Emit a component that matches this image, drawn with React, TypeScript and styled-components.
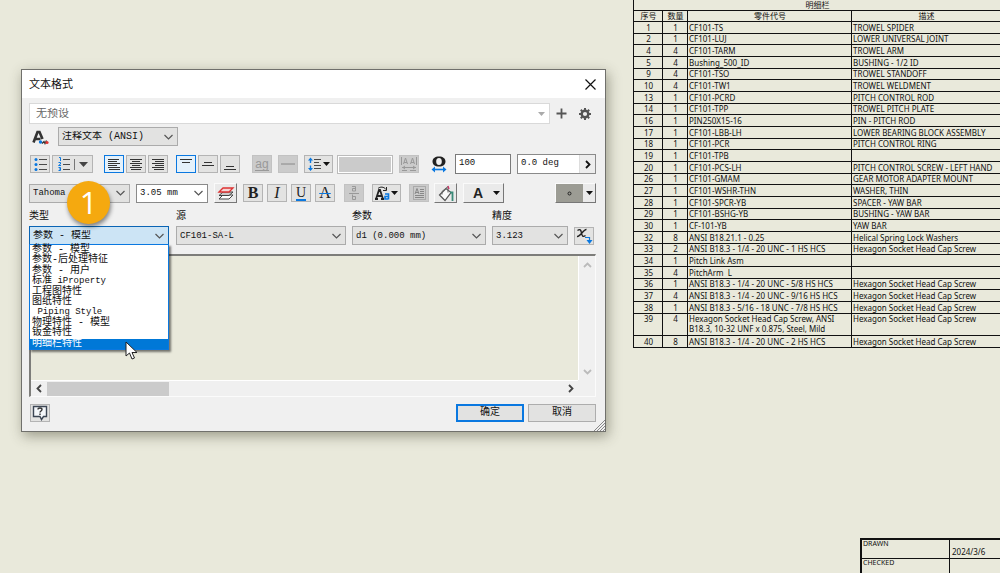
import React from "react";
import styled, { createGlobalStyle, css } from "styled-components";

const ink = "#4a4a4a";
const blue = "#0a78e0";

const GlobalStyle = createGlobalStyle`
  * { box-sizing: border-box; }
  body {
    margin: 0;
    background: #e9e9db;
    color: #111;
    font-family: "Liberation Mono", "Noto Sans CJK SC", monospace;
    font-size: 10px;
  }
  button, input, select, textarea { font: inherit; color: inherit; margin: 0; border-radius: 0; }
`;

/* ---------- drawing sheet ---------- */

const Sheet = styled.main`
  position: relative;
  display: flex;
  flex-direction: column;
  align-items: flex-end;
  justify-content: space-between;
  min-height: 100vh;
  overflow: hidden;
  font-family: "Noto Sans", "Noto Sans CJK SC", sans-serif;
  font-size: 8px;
  line-height: 10px;
`;

const PartsTable = styled.table`
  width: 367px;
  height: 348px;
  table-layout: fixed;
  border-collapse: collapse;
  th, td {
    border: 1px solid #111;
    border-right: 0;
    padding: 0 0 0 1px;
    font-weight: 400;
    vertical-align: bottom;
    white-space: nowrap;
  }
  tr:first-child th { border-top: 0; }
  tr:nth-last-child(2) td { vertical-align: top; }
  td:nth-child(-n + 2) { text-align: center; }
`;

const Col = styled.col<{ $w?: number }>`
  ${(p) => p.$w && css`width: ${p.$w}px;`}
`;

const TitleBlock = styled.dl`
  display: grid;
  grid-template-columns: 88px 50px;
  grid-template-rows: 19px 14px;
  margin: 0;
  border-top: 2px solid #111;
  border-left: 2px solid #111;
  line-height: 8px;
  font-size: 7px;
  dt { border-right: 1px solid #111; padding-left: 1px; }
  dd { margin: 0; padding: 8px 0 0 2px; font-size: 8px; }
  dt:first-child, dd:nth-child(2) { border-bottom: 1px solid #111; }
`;

const parts: [number, number, string, string][] = [
  [1, 1, "CF101-TS", "TROWEL SPIDER"],
  [2, 1, "CF101-LUJ", "LOWER UNIVERSAL JOINT"],
  [4, 4, "CF101-TARM", "TROWEL ARM"],
  [5, 4, "Bushing_500_ID", "BUSHING - 1/2 ID"],
  [9, 4, "CF101-TSO", "TROWEL STANDOFF"],
  [10, 4, "CF101-TW1", "TROWEL WELDMENT"],
  [13, 1, "CF101-PCRD", "PITCH CONTROL ROD"],
  [14, 1, "CF101-TPP", "TROWEL PITCH PLATE"],
  [16, 1, "PIN250X15-16", "PIN - PITCH ROD"],
  [17, 1, "CF101-LBB-LH", "LOWER BEARING BLOCK ASSEMBLY"],
  [18, 1, "CF101-PCR", "PITCH CONTROL RING"],
  [19, 1, "CF101-TPB", ""],
  [20, 1, "CF101-PCS-LH", "PITCH CONTROL SCREW - LEFT HAND"],
  [26, 1, "CF101-GMAM", "GEAR MOTOR ADAPTER MOUNT"],
  [27, 1, "CF101-WSHR-THN", "WASHER, THIN"],
  [28, 1, "CF101-SPCR-YB", "SPACER - YAW BAR"],
  [29, 1, "CF101-BSHG-YB", "BUSHING - YAW BAR"],
  [30, 1, "CF-101-YB", "YAW BAR"],
  [32, 8, "ANSI B18.21.1 - 0.25", "Helical Spring Lock Washers"],
  [33, 2, "ANSI B18.3 - 1/4 - 20 UNC - 1 HS HCS", "Hexagon Socket Head Cap Screw"],
  [34, 1, "Pitch Link Asm", ""],
  [35, 4, "PitchArm  L", ""],
  [36, 1, "ANSI B18.3 - 1/4 - 20 UNC - 5/8 HS HCS", "Hexagon Socket Head Cap Screw"],
  [37, 4, "ANSI B18.3 - 1/4 - 20 UNC - 9/16 HS HCS", "Hexagon Socket Head Cap Screw"],
  [38, 1, "ANSI B18.3 - 5/16 - 18 UNC - 7/8 HS HCS", "Hexagon Socket Head Cap Screw"],
  [39, 4, "Hexagon Socket Head Cap Screw, ANSI\nB18.3, 10-32 UNF x 0.875, Steel, Mild", "Hexagon Socket Head Cap Screw"],
  [40, 8, "ANSI B18.3 - 1/4 - 20 UNC - 2 HS HCS", "Hexagon Socket Head Cap Screw"],
];

const PartName = styled.span`
  white-space: pre;
`;

/* ---------- dialog ---------- */

const Dialog = styled.section`
  position: absolute;
  left: 21px;
  top: 69px;
  width: 585px;
  max-width: calc(100% - 21px);
  border: 1px solid #70706c;
  background: #f0f0f0;
  box-shadow: 2px 4px 12px rgba(60, 60, 40, 0.45);
  font-family: "Liberation Mono", "Noto Sans CJK SC", monospace;
  font-size: 10px;
  line-height: 12px;
`;

const TitleBar = styled.header`
  display: flex;
  align-items: center;
  justify-content: space-between;
  height: 28px;
  padding: 0 8px 0 7px;
  background: #fff;
  h1 {
    margin: 0;
    font: 400 11px/14px "Liberation Sans", "Noto Sans CJK SC", sans-serif;
  }
`;

const Body = styled.div`
  display: flex;
  flex-direction: column;
  padding: 5px 9px 9px 7px;
`;

const Row = styled.div<{ $h: number; $mt?: number }>`
  display: flex;
  align-items: center;
  height: ${(p) => p.$h}px;
  margin-top: ${(p) => p.$mt ?? 0}px;
`;

const Group = styled.div<{ $gap?: number; $ml?: number; $push?: boolean }>`
  display: flex;
  align-items: center;
  gap: ${(p) => p.$gap ?? 2}px;
  margin-left: ${(p) => (p.$push ? "auto" : `${p.$ml ?? 0}px`)};
`;

const BareButton = styled.button<{ $w?: number }>`
  display: flex;
  align-items: center;
  justify-content: center;
  flex: none;
  width: ${(p) => p.$w ?? 14}px;
  height: 18px;
  padding: 0;
  border: 0;
  background: none;
`;

const ToolButton = styled(BareButton)<{ $on?: boolean; $raised?: boolean }>`
  width: ${(p) => p.$w ?? 20}px;
  border: 1px solid #b4b4b4;
  background: #e3e3e2;
  &:disabled { background: #cbcbcb; border-color: #c2c2c2; }
  ${(p) => p.$on && css`
    border-color: ${blue};
    background: #e4f1fb;
  `}
  ${(p) => p.$raised && css`
    height: 20px;
    border-color: #fafafa #777 #777 #fafafa;
    background: #eaeaea;
  `}
`;

const PresetBox = styled.div`
  display: grid;
  flex: 1;
  height: 21px;
  border: 1px solid #d9d9d9;
  background: #fff;
  svg { grid-area: 1 / 1; place-self: center end; margin-right: 4px; pointer-events: none; }
  select {
    grid-area: 1 / 1;
    appearance: none;
    border: 0;
    padding: 0 6px;
    background: none;
    color: #666;
    font-size: 11px;
  }
`;

const SelectBox = styled.div<{ $w: number; $white?: boolean; $open?: boolean; $small?: boolean }>`
  position: relative;
  display: grid;
  flex: none;
  width: ${(p) => p.$w}px;
  height: 19px;
  border: 1px solid ${(p) => (p.$open ? "#0a64b4" : p.$white ? "#8a8a8a" : "#ababab")};
  background: ${(p) => (p.$open ? "#cce4f5" : p.$white ? "#fff" : "#e2e2e1")};
  > svg { grid-area: 1 / 1; place-self: center end; margin-right: 4px; pointer-events: none; }
  > select {
    grid-area: 1 / 1;
    min-width: 0;
    appearance: none;
    border: 0;
    padding: 0 3px;
    background: none;
    font-size: ${(p) => (p.$small ? 9 : 10)}px;
  }
`;

const Options = styled.ul`
  position: absolute;
  z-index: 2;
  left: -1px;
  top: 17px;
  display: grid;
  grid-auto-rows: 1fr;
  width: calc(100% + 2px);
  height: 106px;
  margin: 0;
  padding: 0;
  border: 1px solid ${blue};
  background: #fff;
  box-shadow: 2px 2px 2px rgba(0, 0, 0, 0.5);
  list-style: none;
  line-height: 10px;
  white-space: pre;
`;

const Option = styled.li<{ $on?: boolean }>`
  padding-left: 2px;
  ${(p) => p.$on && css`
    background: #0078d7;
    color: #fff;
  `}
`;

const Latin = styled.span`
  font-size: 9px;
`;

const TextField = styled.input<{ $w: number }>`
  width: ${(p) => p.$w}px;
  height: 20px;
  padding: 0 3px 2px;
  border: 1px solid #7a7a7a;
  background: #fff;
  && { font-size: 9px; }
`;

const AngleBox = styled.div`
  display: flex;
  width: 79px;
  height: 20px;
  border: 1px solid #8a8a8a;
  input { border: 0; flex: 1; height: 18px; }
  button { border-left: 1px solid #ddd; background: #ededed; }
`;

const Swatch = styled.div`
  width: 56px;
  height: 19px;
  border: 1px solid #bbb;
  outline: 1px solid #fff;
  outline-offset: -2px;
  background: #cbcbcb;
`;

const ColorCell = styled.span`
  display: flex;
  align-items: center;
  justify-content: center;
  flex: 1;
  align-self: stretch;
  background: #9c9c94;
`;

const Fields = styled.div`
  display: grid;
  grid-template-columns: 141px 170px 134px 76px 20px;
  column-gap: 6px;
  row-gap: 3px;
  align-items: center;
  justify-content: start;
  margin-top: 8px;
  label { line-height: 12px; }
`;

const Editor = styled.div`
  display: grid;
  grid-template-columns: 1fr 17px;
  grid-template-rows: 124px 16px;
  margin-top: 9px;
  border: 1px solid #fbfbfb;
  border-top: 2px solid #7d7d7a;
  border-left: 2px solid #7d7d7a;
  textarea {
    min-width: 0;
    border: 0;
    padding: 4px;
    background: #e9e9db;
    resize: none;
    outline: 0;
  }
`;

const VScroll = styled.div`
  display: flex;
  flex-direction: column;
  justify-content: space-between;
  align-items: center;
  border-left: 1px solid #fff;
`;

const HScroll = styled.div`
  display: flex;
  align-items: center;
  border-top: 1px solid #fff;
  > button:last-child { margin-left: auto; }
`;

const Thumb = styled.div`
  width: 122px;
  height: 14px;
  background: #cbcbcb;
`;

const CommandButton = styled.button<{ $primary?: boolean }>`
  width: 68px;
  height: 18px;
  padding: 0;
  border: ${(p) => (p.$primary ? `2px solid ${blue}` : "1px solid #adadad")};
  background: #e2e2e1;
  line-height: 12px;
`;

const Grip = styled.svg`
  position: absolute;
  right: 0;
  bottom: 0;
`;

const StepBadge = styled.div`
  position: absolute;
  z-index: 3;
  left: 67px;
  top: 181px;
  width: 43px;
  height: 43px;
  border-radius: 50%;
  background: #f5a90f;
  box-shadow: 1px 3px 4px rgba(0, 0, 0, 0.45);
  color: #fff;
  font: 400 31px/43px "Open Sans", sans-serif;
  text-align: center;
`;

const Pointer = styled.svg`
  position: absolute;
  z-index: 4;
  left: 125px;
  top: 341px;
`;

/* ---------- icons ---------- */

const Svg = ({ w, h, children }: { w: number; h: number; children: React.ReactNode }) => (
  <svg width={w} height={h} viewBox={`0 0 ${w} ${h}`} fill="none" aria-hidden="true">{children}</svg>
);

const Chevron = () => (
  <Svg w={9} h={6}><path d="M.5 1l4 4 4-4" stroke="#555" strokeWidth="1.2" /></Svg>
);

const Caret = ({ color = "#111" }: { color?: string }) => (
  <Svg w={7} h={4}><path d="M0 0h7L3.500 4z" fill={color} /></Svg>
);

const Arrow = ({ d, color }: { d: string; color: string }) => (
  <Svg w={9} h={9}><path d={d} stroke={color} strokeWidth="1.800" /></Svg>
);

const Lines = ({ rows }: { rows: [number, number, number][] }) => (
  <Svg w={18} h={16}>
    {rows.map(([y, x1, x2]) => (
      <path key={y} d={`M${x1} ${y + 0.5}H${x2}`} stroke="#333" />
    ))}
  </Svg>
);

const alignLeft: [number, number, number][] = [[3, 3, 14], [5, 3, 12], [7, 3, 15], [9, 3, 12], [11, 3, 15], [13, 4, 15]];
const alignMid: [number, number, number][] = [[3, 3, 15], [5, 5, 13], [7, 3, 15], [9, 5, 13], [11, 3, 15], [13, 4, 14]];
const alignRight: [number, number, number][] = [[3, 3, 15], [5, 6, 15], [7, 3, 15], [9, 6, 15], [11, 3, 15], [13, 5, 15]];

const Bullets = () => (
  <Svg w={18} h={16}>
    <path d="M8 3.500h8M8 8.500h8M8 13.500h8" stroke={ink} />
    <g fill={blue}><circle cx="5" cy="3.500" r="1.500" /><circle cx="5" cy="8.500" r="1.500" /><circle cx="5" cy="13.500" r="1.500" /></g>
  </Svg>
);

const Numbered = () => (
  <Svg w={38} h={16}>
    <path d="M9 3.500h7M9 8.500h7M9 13.500h7" stroke={ink} />
    <path d="M5 1.500h1.500v3.500M4.500 6.500h2v1.500l-2 1.500h2.500M4.500 11.500h2v1.500h-1.500M6.500 13v1.500h-2" stroke={blue} />
    <path d="M20.500 3v11" stroke="#777" />
    <path d="M25 6h9l-4.500 5z" fill="#444" />
  </Svg>
);

const TextStyle = () => (
  <Svg w={18} h={18}>
    <path d="M2.500 14.500L6.500 4h2l3 7M4.500 11h5" stroke="#333" strokeWidth="2.600" />
    <circle cx="9.500" cy="14" r="1.700" fill={blue} />
    <path d="M11 15.500l2-2 1 2 1.500-3" stroke="#333" strokeWidth="1.300" />
    <circle cx="16" cy="14.500" r="1.600" fill="#d33" />
  </Svg>
);

const Gear = () => (
  <Svg w={12} h={12}>
    <circle cx="6" cy="6" r="3.300" stroke="#555" strokeWidth="2.400" />
    <path d="M6 0v2M6 10v2M0 6h2M10 6h2M1.800 1.800l1.400 1.400M8.800 8.800l1.400 1.400M10.200 1.800L8.800 3.200M1.800 10.200l1.400-1.400" stroke="#555" strokeWidth="2" />
  </Svg>
);

const Spacing = () => (
  <Svg w={27} h={16}>
    <path d="M5.500 3v4M5.500 9.500v4" stroke={blue} strokeWidth="1.400" />
    <path d="M3 4.500L5.500 1.500 8 4.500zM3 12l2.500 3L8 12z" fill={blue} />
    <path d="M9 3.500h7M9 6.500h5M9 9.500h7M9 12.500h7" stroke={ink} />
    <path d="M18 6h7l-3.500 4z" fill="#111" />
  </Svg>
);

const Glyph = styled.span<{ $size: number; $serif?: boolean; $bold?: boolean; $italic?: boolean; $color?: string }>`
  font-family: ${(p) => (p.$serif ? '"Liberation Serif", serif' : '"Liberation Sans", sans-serif')};
  font-size: ${(p) => p.$size}px;
  line-height: ${(p) => p.$size}px;
  font-weight: ${(p) => (p.$bold ? 700 : 400)};
  font-style: ${(p) => (p.$italic ? "italic" : "normal")};
  color: ${(p) => p.$color ?? "#222"};
`;

const Underlined = styled(Glyph)`
  border-bottom: 2px solid ${blue};
  line-height: 13px;
`;

const Struck = styled(Glyph)`
  text-decoration: line-through ${blue} 1px;
`;

const GrayUnder = styled(Glyph)`
  border-bottom: 1px solid #999;
  line-height: 12px;
`;

const Layers = () => (
  <Svg w={18} h={16}>
    <path d="M2 14l4-4h10l-4 4z" fill="#fff" stroke="#444" />
    <path d="M2 10.500L6 7h10l-4 3.500z" fill="#ccc" stroke="#444" />
    <path d="M2 7l4-4h10l-4 4z" fill="#f5d5d5" stroke="#d33" strokeWidth="1.300" />
  </Svg>
);

const Fraction = () => (
  <Svg w={18} h={16}>
    <path d="M4 8.500h10" stroke="#999" />
    <path d="M7 1.500h3.500v4.500h-3v-2.500h3M7.500 9.500v5h3v-3h-3" stroke="#999" />
  </Svg>
);

const CaseChange = () => (
  <Svg w={27} h={16}>
    <path d="M3 14L6 5h1l3 9M2 14h3M8 14h3M4.500 11h4" stroke="#222" strokeWidth="1.800" />
    <path d="M5 3.500c2-2 6-2 8 1M13.500 2v3.500H10" stroke="#222" />
    <path d="M12 9h3.500v5.500M15.500 11.500H12v2.500h3" stroke={blue} strokeWidth="1.600" />
    <path d="M18 6h7l-3.500 4z" fill="#111" />
  </Svg>
);

const TextFrame = () => (
  <Svg w={18} h={16}>
    <rect x="3.500" y="1.500" width="12" height="13" stroke="#888" strokeDasharray="1 1" />
    <path d="M5 9l2-5.500L9 9M5.500 7.500h3M10 4.500h4M10 6.500h4M10 8.500h4M5 10.500h9M5 12.500h9" stroke="#888" />
  </Svg>
);

const Bucket = () => (
  <Svg w={18} h={17}>
    <path d="M2.500 10L9 3.500l5 4-6 8z" fill="#fafafa" stroke="#555" strokeWidth="1.200" />
    <path d="M5 6.500L11 1.500v6M5 6.500v3" stroke="#666" />
    <path d="M11 1l1 3" stroke="#c36" strokeWidth="1.300" />
    <path d="M13 7.500h2.500V16" stroke="#3a8a78" strokeWidth="1.800" />
  </Svg>
);

const Stretch = () => (
  <Svg w={16} h={18}>
    <path
      fillRule="evenodd"
      d="M8 1.500c4 0 6.500 2 6.500 5s-2.500 5-6.500 5-6.500-2-6.500-5 2.500-5 6.500-5zM8 3c-2 0-2.800 1.500-2.800 3.500S6 10 8 10s2.800-1.500 2.800-3.500S10 3 8 3z"
      fill="#222"
    />
    <path d="M2 14.500h12" stroke={blue} strokeWidth="1.600" />
    <path d="M4 11.500v6L.5 14.500zM12 11.500v6l3.500-3z" fill={blue} />
  </Svg>
);

const Tracking = () => (
  <Svg w={18} h={16}>
    <path d="M1.500 1v8M16.500 1v8M3.500 8l2-6 2 6M4 6.500h3M10.500 8l2-6 2 6M11 6.500h3M2 11.500h14M2 14.500h5M10 14.500h6M5 10l-2 1.500L5 13M13 10l2 1.500-2 1.500" stroke="#999" />
  </Svg>
);

const ParamInsert = () => (
  <Svg w={18} h={16}>
    <path d="M2.500 2.500C5 .5 6 2 6.500 5s1.500 4.500 4 2.500M11.500 1.500C8.500 1 5.500 9 2 8.500" stroke="#222" strokeWidth="1.400" />
    <path d="M10 9.500h4.500v3" stroke={blue} strokeWidth="1.200" />
    <path d="M11.500 12h6l-3 4z" fill={blue} />
  </Svg>
);

const Help = () => (
  <Svg w={18} h={16}>
    <path d="M2.500 1.500h13v10h-3l-2 3-1.500-3H2.500z" fill="#f4f7fa" stroke="#3c4654" strokeWidth="1.400" />
    <path d="M7 4.500c0-2 4-2 4 0 0 1.500-2 1.500-2 3M9 8.500V10" stroke="#333" strokeWidth="1.400" />
  </Svg>
);

/* ---------- page ---------- */

export default function App() {
  return (
    <Sheet>
      <GlobalStyle />
      <PartsTable>
        <colgroup><Col $w={29} /><Col $w={25} /><Col $w={164} /><Col /></colgroup>
        <thead>
          <tr><th colSpan={4}>明细栏</th></tr>
          <tr><th>序号</th><th>数量</th><th>零件代号</th><th>描述</th></tr>
        </thead>
        <tbody>
          {parts.map(([no, qty, name, text]) => (
            <tr key={no}><td>{no}</td><td>{qty}</td><td><PartName>{name}</PartName></td><td>{text}</td></tr>
          ))}
        </tbody>
      </PartsTable>
      <TitleBlock>
        <dt>DRAWN</dt><dd>2024/3/6</dd>
        <dt>CHECKED</dt><dd />
      </TitleBlock>

      <Dialog role="dialog" aria-labelledby="dialog-title">
        <TitleBar>
          <h1 id="dialog-title">文本格式</h1>
          <BareButton aria-label="关闭"><Svg w={11} h={11}><path d="M.5.5l10 10M10.500.5l-10 10" stroke="#111" strokeWidth="1.200" /></Svg></BareButton>
        </TitleBar>
        <Body>
          <Row $h={21}>
            <PresetBox>
              <select aria-label="预设"><option>无预设</option></select>
              <Caret color="#aaa" />
            </PresetBox>
            <Group $ml={4} $gap={10}>
              <BareButton aria-label="添加预设"><Svg w={11} h={11}><path d="M5.500 .5v10M.5 5.500h10" stroke="#555" strokeWidth="1.800" /></Svg></BareButton>
              <BareButton aria-label="设置"><Gear /></BareButton>
            </Group>
            <Group $ml={4} />
          </Row>
          <Row $h={19} $mt={3}>
            <Group $gap={9} $ml={2}>
              <TextStyle />
              <SelectBox $w={120}>
                <select aria-label="样式"><option>注释文本 (ANSI)</option></select>
                <Chevron />
              </SelectBox>
            </Group>
          </Row>
          <Row $h={20} $mt={8}>
            <Group $ml={1}>
              <ToolButton aria-label="项目符号"><Bullets /></ToolButton>
              <ToolButton $w={41} aria-label="编号"><Numbered /></ToolButton>
            </Group>
            <Group $ml={11}>
              <ToolButton $on aria-label="左对齐"><Lines rows={alignLeft} /></ToolButton>
              <ToolButton aria-label="居中"><Lines rows={alignMid} /></ToolButton>
              <ToolButton aria-label="右对齐"><Lines rows={alignRight} /></ToolButton>
            </Group>
            <Group $ml={8}>
              <ToolButton $on aria-label="顶部"><Lines rows={[[3, 3, 15], [6, 5, 13]]} /></ToolButton>
              <ToolButton aria-label="中部"><Lines rows={[[6, 5, 13], [9, 3, 15]]} /></ToolButton>
              <ToolButton aria-label="底部"><Lines rows={[[10, 5, 13], [13, 3, 15]]} /></ToolButton>
            </Group>
            <Group $ml={12} $gap={6}>
              <ToolButton disabled aria-label="基线"><GrayUnder $size={12} $color="#999">ag</GrayUnder></ToolButton>
              <ToolButton disabled aria-label="单线"><Svg w={14} h={2}><path d="M0 1h14" stroke="#888" /></Svg></ToolButton>
              <ToolButton $w={29} aria-label="行距"><Spacing /></ToolButton>
            </Group>
            <Group $ml={4} $gap={6}>
              <Swatch />
              <ToolButton disabled aria-label="字距"><Tracking /></ToolButton>
            </Group>
            <Group $ml={12} $gap={8}>
              <Stretch />
              <TextField $w={56} aria-label="拉伸" defaultValue="100" />
            </Group>
            <Group $push>
              <AngleBox>
                <TextField $w={50} aria-label="旋转" defaultValue="0.0 deg" />
                <BareButton $w={16} aria-label="更多角度"><Arrow d="M3 1l3.500 3.500L3 8" color="#111" /></BareButton>
              </AngleBox>
            </Group>
          </Row>
          <Row $h={20} $mt={9}>
            <Group $gap={6}>
              <SelectBox $w={101} $small><select aria-label="字体"><option>Tahoma</option></select><Chevron /></SelectBox>
              <SelectBox $w={72} $white $small><select aria-label="字号"><option>3.05 mm</option></select><Chevron /></SelectBox>
              <ToolButton $raised $w={23} aria-label="图层"><Layers /></ToolButton>
            </Group>
            <Group $ml={6} $gap={4}>
              <ToolButton aria-label="粗体"><Glyph $size={16} $serif $bold>B</Glyph></ToolButton>
              <ToolButton aria-label="斜体"><Glyph $size={16} $serif $italic>I</Glyph></ToolButton>
              <ToolButton aria-label="下划线"><Underlined $size={14} $serif>U</Underlined></ToolButton>
              <ToolButton aria-label="删除线"><Struck $size={16} $serif>A</Struck></ToolButton>
            </Group>
            <Group $ml={9} $gap={8}>
              <ToolButton disabled aria-label="堆叠"><Fraction /></ToolButton>
              <ToolButton $w={29} aria-label="大小写"><CaseChange /></ToolButton>
              <ToolButton disabled aria-label="文本框"><TextFrame /></ToolButton>
            </Group>
            <Group $ml={5} $gap={6}>
              <ToolButton $raised $w={23} aria-label="填充"><Bucket /></ToolButton>
              <ToolButton $raised $w={41} aria-label="颜色">
                <Group $gap={10} $ml={6}><Glyph $size={14} $bold>A</Glyph><Caret /></Group>
              </ToolButton>
            </Group>
            <Group $push>
              <ToolButton $raised $w={41} aria-label="符号">
                <ColorCell><Svg w={5} h={5}><circle cx="2.500" cy="2.500" r="1.500" stroke="#222" /></Svg></ColorCell>
                <BareButton as="span" $w={12}><Caret /></BareButton>
              </ToolButton>
            </Group>
          </Row>
          <Fields>
            <label htmlFor="type">类型</label>
            <label htmlFor="source">源</label>
            <label htmlFor="param">参数</label>
            <label htmlFor="precision">精度</label>
            <span />
            <SelectBox $w={140} $open>
              <select id="type"><option>参数 - 模型</option></select>
              <Chevron />
              <Options role="listbox" aria-label="类型">
                <Option role="option">参数 - 模型</Option>
                <Option role="option">参数-后处理特征</Option>
                <Option role="option">参数 - 用户</Option>
                <Option role="option">标准<Latin> iProperty</Latin></Option>
                <Option role="option">工程图特性</Option>
                <Option role="option">图纸特性</Option>
                <Option role="option"><Latin> Piping Style</Latin></Option>
                <Option role="option">物理特性 - 模型</Option>
                <Option role="option">钣金特性</Option>
                <Option role="option" aria-selected $on>明细栏特性</Option>
              </Options>
            </SelectBox>
            <SelectBox $w={170} $small><select id="source"><option>CF101-SA-L</option></select><Chevron /></SelectBox>
            <SelectBox $w={134} $small><select id="param"><option>d1 (0.000 mm)</option></select><Chevron /></SelectBox>
            <SelectBox $w={76} $small><select id="precision"><option>3.123</option></select><Chevron /></SelectBox>
            <ToolButton aria-label="插入参数"><ParamInsert /></ToolButton>
          </Fields>
          <Editor>
            <textarea aria-label="文本" />
            <VScroll>
              <BareButton aria-label="向上"><Arrow d="M1 6l3.500-3.500L8 6" color="#bbb" /></BareButton>
              <BareButton aria-label="向下"><Arrow d="M1 3l3.500 3.500L8 3" color="#bbb" /></BareButton>
            </VScroll>
            <HScroll>
              <BareButton $w={16} aria-label="向左"><Arrow d="M6 1L2.500 4.500 6 8" color="#444" /></BareButton>
              <Thumb />
              <BareButton $w={16} aria-label="向右"><Arrow d="M3 1l3.500 3.500L3 8" color="#444" /></BareButton>
            </HScroll>
          </Editor>
          <Row $h={18} $mt={7}>
            <Group $ml={1}><ToolButton aria-label="帮助"><Help /></ToolButton></Group>
            <Group $push $gap={4}>
              <CommandButton $primary>确定</CommandButton>
              <CommandButton>取消</CommandButton>
            </Group>
          </Row>
        </Body>
        <Grip width="11" height="11" viewBox="0 0 11 11" aria-hidden="true">
          <path d="M0 11L11 0M3 11l8-8M6 11l5-5M9 11l2-2" stroke="#888" />
        </Grip>
      </Dialog>
      <StepBadge>1</StepBadge>
      <Pointer width="13" height="20" viewBox="0 0 13 20" aria-hidden="true">
        <path d="M1 1v14l3.500-3 2.500 6 2.500-1-2.500-5.500h5z" fill="#fff" stroke="#222" />
      </Pointer>
    </Sheet>
  );
}
